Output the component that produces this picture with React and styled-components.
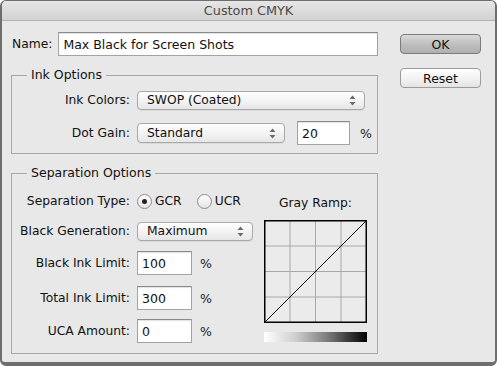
import React from "react";
import styled, { createGlobalStyle } from "styled-components";

const Global = createGlobalStyle`
  html, body { margin: 0; padding: 0; background: #ffffff; }
  body { font-family: "DejaVu Sans", "Liberation Sans", sans-serif; font-size: 12.3px; color: #111; }
  * { box-sizing: border-box; }
`;

const Window = styled.div`
  width: 497px;
  height: 366px;
  display: flex;
  flex-direction: column;
  border: 2px solid #6e6e6e;
  border-top-width: 1px;
  border-bottom-width: 4px;
  border-radius: 6px;
  background: #e8e8e8;
  overflow: hidden;
`;

const TitleBar = styled.div`
  height: 20px;
  flex: none;
  display: flex;
  align-items: center;
  justify-content: center;
  background: linear-gradient(#e6e6e6, #d2d2d2);
  border-bottom: 1px solid #b4b4b4;
  color: #4a4a4a;
  font-size: 12.8px;
`;

const Body = styled.div`
  flex: 1;
  display: grid;
  grid-template-columns: 367px 81px;
  column-gap: 22px;
  padding: 11px 0 0 9px;
`;

const Main = styled.div`
  display: flex;
  flex-direction: column;
`;

const NameRow = styled.div`
  display: flex;
  align-items: center;
  height: 24px;
  gap: 6px;
  padding-left: 1px;
`;

const Input = styled.div`
  height: 24px;
  width: ${(p) => p.$w}px;
  display: flex;
  align-items: center;
  padding-left: 4px;
  background: #fff;
  border: 1px solid #a3a3a3;
  border-top-color: #8a8a8a;
  box-shadow: inset 0 1px 1px rgba(0, 0, 0, 0.12);
  font-size: 12.5px;
`;

const Group = styled.fieldset`
  margin: ${(p) => p.$mt}px 0 0 0;
  padding: ${(p) => p.$pad};
  border: 1px solid #a8a8a8;
  min-width: 0;
`;

const Legend = styled.legend`
  margin-left: 15px;
  padding: 0 4px;
  line-height: 16px;
  font-size: 12.5px;
`;

const FormGrid = styled.div`
  display: flex;
  flex-direction: column;
  padding-top: ${(p) => p.$pt || 0}px;
`;

const Row = styled.div`
  display: grid;
  grid-template-columns: 118px auto;
  column-gap: 7px;
  align-items: center;
  height: 24px;
  margin-top: ${(p) => p.$mt || 0}px;
`;

const Label = styled.div`
  text-align: right;
  white-space: nowrap;
`;

const Controls = styled.div`
  display: flex;
  align-items: center;
  gap: ${(p) => p.$gap || 8}px;
`;

const SelectBox = styled.div`
  width: ${(p) => p.$w}px;
  height: ${(p) => p.$h || 19}px;
  display: flex;
  align-items: center;
  justify-content: space-between;
  padding: 0 8px 0 9px;
  border: 1px solid #a9a9a9;
  border-radius: 4px;
  background: linear-gradient(#ffffff, #f1f1f1 60%, #e6e6e6);
  box-shadow: 0 1px 0 rgba(0, 0, 0, 0.06);
`;

const Pct = styled.span`
  font-size: 12.5px;
  color: #222;
  margin-left: ${(p) => p.$ml || 0}px;
`;

const Radio = styled.div`
  width: 15px;
  height: 15px;
  border-radius: 50%;
  border: 1px solid #8c8c8c;
  background: linear-gradient(#ffffff, #e4e4e4);
  display: flex;
  align-items: center;
  justify-content: center;
  &::after {
    content: "";
    width: 5px;
    height: 5px;
    border-radius: 50%;
    background: ${(p) => (p.$on ? "#222" : "transparent")};
  }
`;

const RadioItem = styled.div`
  display: flex;
  align-items: center;
  gap: 3px;
`;

const SepBody = styled.div`
  display: flex;
  justify-content: space-between;
`;

const RampCol = styled.div`
  display: flex;
  flex-direction: column;
  align-items: center;
  width: 103px;
  padding-top: 14px;
`;

const RampTitle = styled.div`
  line-height: 16px;
  margin-bottom: 9px;
`;

const RampBar = styled.div`
  margin-top: 9px;
  width: 103px;
  height: 10px;
  background: linear-gradient(to right, #ffffff, #d0d0d0 30%, #808080 60%, #000000);
`;

const ButtonCol = styled.div`
  display: flex;
  flex-direction: column;
  gap: 14px;
  padding-top: 2px;
`;

const Button = styled.div`
  height: 20px;
  display: flex;
  align-items: center;
  justify-content: center;
  border-radius: 4px;
  border: 1px solid ${(p) => (p.$primary ? "#7c7c7c" : "#9c9c9c")};
  background: ${(p) =>
    p.$primary
      ? "linear-gradient(#d9d9d9, #bdbdbd 55%, #b0b0b0)"
      : "linear-gradient(#ffffff, #f2f2f2 55%, #e3e3e3)"};
  font-size: 12.5px;
`;

const Arrows = () => (
  <svg width="7" height="11" viewBox="0 0 7 11">
    <path d="M3.5 0.5 L6.5 4 L0.5 4 Z" fill="#6a6a6a" />
    <path d="M3.5 10.5 L6.5 7 L0.5 7 Z" fill="#6a6a6a" />
  </svg>
);

const Select = ({ w, h, children }) => (
  <SelectBox $w={w} $h={h}>
    <span>{children}</span>
    <Arrows />
  </SelectBox>
);

const GrayRamp = () => (
  <svg width="103" height="103" viewBox="0 0 103 103">
    <rect x="0" y="0" width="103" height="103" fill="#ebebeb" />
    {[26, 51.5, 77].map((v) => (
      <g key={v}>
        <line x1={v} y1="0" x2={v} y2="103" stroke="#a8a8a8" strokeWidth="1" />
        <line x1="0" y1={v} x2="103" y2={v} stroke="#a8a8a8" strokeWidth="1" />
      </g>
    ))}
    <line x1="1" y1="102" x2="102" y2="1" stroke="#000" strokeWidth="1" />
    <rect x="0.75" y="0.75" width="101.5" height="101.5" fill="none" stroke="#000" strokeWidth="1.5" />
  </svg>
);

export default function App() {
  return (
    <>
      <Global />
      <Window>
        <TitleBar>Custom CMYK</TitleBar>
        <Body>
          <Main>
            <NameRow>
              <Label>Name:</Label>
              <Input $w={320}>Max Black for Screen Shots</Input>
            </NameRow>

            <Group $mt={11} $pad="5px 0 8px 0">
              <Legend>Ink Options</Legend>
              <FormGrid>
                <Row>
                  <Label>Ink Colors:</Label>
                  <Controls>
                    <Select w={228} h={19}>SWOP (Coated)</Select>
                  </Controls>
                </Row>
                <Row $mt={9}>
                  <Label>Dot Gain:</Label>
                  <Controls $gap={12}>
                    <Select w={148} h={20}>Standard</Select>
                    <Input $w={53}>20</Input>
                    <Pct $ml={-2}>%</Pct>
                  </Controls>
                </Row>
              </FormGrid>
            </Group>

            <Group $mt={11} $pad="0 10px 10px 0">
              <Legend>Separation Options</Legend>
              <SepBody>
                <FormGrid $pt={8}>
                  <Row>
                    <Label>Separation Type:</Label>
                    <Controls $gap={15}>
                      <RadioItem>
                        <Radio $on />
                        <span>GCR</span>
                      </RadioItem>
                      <RadioItem>
                        <Radio />
                        <span>UCR</span>
                      </RadioItem>
                    </Controls>
                  </Row>
                  <Row $mt={6}>
                    <Label>Black Generation:</Label>
                    <Controls>
                      <Select w={116} h={19}>Maximum</Select>
                    </Controls>
                  </Row>
                  <Row $mt={8}>
                    <Label>Black Ink Limit:</Label>
                    <Controls>
                      <Input $w={55}>100</Input>
                      <Pct>%</Pct>
                    </Controls>
                  </Row>
                  <Row $mt={11}>
                    <Label>Total Ink Limit:</Label>
                    <Controls>
                      <Input $w={55}>300</Input>
                      <Pct>%</Pct>
                    </Controls>
                  </Row>
                  <Row $mt={9}>
                    <Label>UCA Amount:</Label>
                    <Controls>
                      <Input $w={55}>0</Input>
                      <Pct>%</Pct>
                    </Controls>
                  </Row>
                </FormGrid>
                <RampCol>
                  <RampTitle>Gray Ramp:</RampTitle>
                  <GrayRamp />
                  <RampBar />
                </RampCol>
              </SepBody>
            </Group>
          </Main>

          <ButtonCol>
            <Button $primary>OK</Button>
            <Button>Reset</Button>
          </ButtonCol>
        </Body>
      </Window>
    </>
  );
}
